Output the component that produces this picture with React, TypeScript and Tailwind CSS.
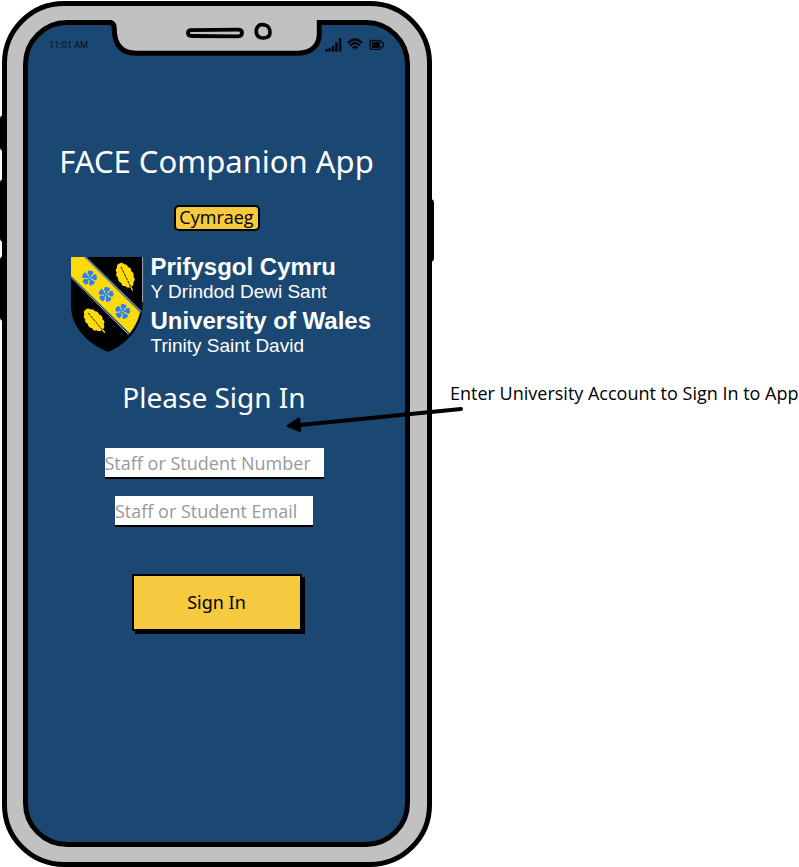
function StatusIcons() {
  return (
    <svg width="60" height="16" viewBox="0 0 60 16" aria-label="Signal, Wi-Fi and battery" role="img">
      <g fill="#000810">
        <rect x="0" y="12" width="3" height="2.6" />
        <rect x="3.4" y="11" width="2.4" height="3.6" />
        <rect x="6.8" y="9" width="2.6" height="5.6" />
        <rect x="10.2" y="5.4" width="2.6" height="9.2" />
        <rect x="13.8" y="1" width="2.6" height="13.6" />
      </g>
      <g fill="none" stroke="#000810" strokeLinecap="round">
        <path d="M23.4 5.6Q30 -.6 36.6 5.6" strokeWidth="2.2" />
        <path d="M25.6 8.3Q30 4 34.4 8.3" strokeWidth="2" />
        <path d="M28 10.6Q30 8.8 32 10.6" strokeWidth="1.8" />
        <path d="M46.5 3.5H54.5Q56 3.5 56.3 5L58.3 6V9.5L56.3 10.5Q56 12.3 54.5 12.3H46.5Q45.2 12.3 45.2 11V4.8Q45.2 3.5 46.5 3.5Z" strokeWidth="1.3" />
      </g>
      <path d="M28.6 11.4H31.4L30 13Z" fill="#000810" />
      <rect x="47" y="5" width="8" height="6" fill="#000810" />
    </svg>
  );
}

function Notch() {
  return (
    <svg className="absolute -top-[7px] left-[76px]" width="222" height="40" viewBox="104 18 222 40" aria-hidden="true">
      <path d="M112 18V22.7Q114.5 24 114.5 30C114.5 44 121 53.4 136 53.4H298C313 53.4 319.3 44 319.3 32V18Z" fill="#c1c1c1" />
      <path
        d="M104 22.5H110Q114.2 23 114.2 28C114.2 44 121 53.2 136 53.2H298C313 53.2 319.3 44 319.3 34V22.5H326"
        fill="none"
        stroke="#000"
        strokeWidth="5"
      />
      <g fill="none" stroke="#000">
        <path d="M191 30.2L238 29.6Q242 29.6 242 32.5Q242 36.3 238 36.3L192 36Q188 36 188 33Q188 30.2 191 30.2Z" strokeWidth="3.8" />
        <path d="M260 24.8Q256 27 256.2 32Q257 38 263 38Q270 38 270 32.5Q270 27 266 25.4Q263 24.2 260 24.8Z" strokeWidth="3.6" />
      </g>
    </svg>
  );
}

function Flower({ x, y }: { x: number; y: number }) {
  return (
    <g transform={`translate(${x} ${y}) scale(1.12)`} fill="#2a7fff">
      {[10, 82, 154, 226, 298].map((a) => (
        <path key={a} transform={`rotate(${a})`} d="M-.7 0L-.9 -2.4Q-3 -3.6 -2.6 -5.6Q-2 -7 0 -6.6Q2 -7 2.6 -5.6Q3 -3.6 .9 -2.4L.7 0Z" />
      ))}
      <circle r=".7" fill="#ffdb0a" />
    </g>
  );
}

function Leaf({ x, y, turn }: { x: number; y: number; turn: number }) {
  return (
    <g transform={`translate(${x} ${y}) rotate(${turn})`}>
      <path
        d="M0 -14Q3.4 -14 4 -11Q7 -10 6.2 -7Q9 -5 7.4 -1.6Q9.4 1.6 6.8 4.4Q8 8 4.6 8.8Q3.6 12.4 .7 12V16H-.6V12Q-3.8 12.4 -4.6 8.8Q-8 8 -6.8 4.4Q-9.4 1.6 -7.4 -1.6Q-9 -5 -6.2 -7Q-7 -10 -4 -11Q-3.4 -14 0 -14Z"
        fill="#ffdb0a"
      />
      <path d="M0 -10V12" stroke="#000" strokeWidth=".8" strokeDasharray="3 .8" />
    </g>
  );
}

function Shield() {
  return (
    <svg width="74" height="97" viewBox="0 0 74 97" aria-hidden="true" className="mt-[2px] shrink-0">
      <path d="M1 1H72.6V48C72.6 72 56 89 37.7 95.8C18 88 1 71 1 50Z" fill="#000" />
      <path d="M1 21L58.4 79L61 76.6Q69 66 71 55V54L17 1H1Z" fill="#1b4872" />
      <path d="M1 1H14L70 56.3Q67 68 59.7 77.3L1 19.7Z" fill="#ffdb0a" />
      <path d="M15 1L71.5 56M1 21.4L58.6 78.6M72.6 1V46" fill="none" stroke="#dfe6ee" strokeWidth=".7" />
      <Flower x={19.5} y={22} />
      <Flower x={36} y={38.5} />
      <Flower x={52.6} y={55.5} />
      <Leaf x={55.4} y={20} turn={-26} />
      <Leaf x={24.5} y={64.5} turn={-40} />
    </svg>
  );
}

function UniversityLogo() {
  return (
    <div className="mt-[23px] flex w-[294px] items-start gap-[7px] whitespace-nowrap font-['Liberation_Sans',Arial,sans-serif] text-white">
      <Shield />
      <div>
        <p className="text-[24px] leading-[26px] font-bold">Prifysgol Cymru</p>
        <p className="text-[19px] leading-[24px]">Y Drindod Dewi Sant</p>
        <p className="mt-1 text-[24px] leading-[26px] font-bold">University of Wales</p>
        <p className="text-[19px] leading-[24px]">Trinity Saint David</p>
      </div>
    </div>
  );
}

function Phone() {
  return (
    <div className="relative ml-[2px] w-[430px] shrink-0 rounded-[62px] border-[5px] border-black bg-[#c1c1c1] pt-[14px] pr-[17px] pb-[15px] pl-[16px]">
      <span className="absolute top-[109px] -left-[7px] h-[36px] w-[4px] rounded-l-sm bg-black" />
      <span className="absolute top-[173px] -left-[7px] h-[63px] w-[4px] rounded-l-sm bg-black" />
      <span className="absolute top-[250px] -left-[7px] h-[65px] w-[4px] rounded-l-sm bg-black" />
      <span className="absolute top-[193px] -right-[7px] h-[63px] w-[4px] rounded-r-sm bg-black" />

      <div className="relative rounded-[44px] border-[5px] border-black bg-[#1b4872] pb-[211px]">
        <Notch />
        <div className="flex h-10 items-center justify-between pr-[20px] pl-[21px]">
          <span className="font-['Open_Sans',sans-serif] text-[9px] font-medium text-[#000810]">11:01 AM</span>
          <StatusIcons />
        </div>

        <form className="pt-[76px]" onSubmit={(e) => e.preventDefault()}>
          <div className="flex flex-col items-center">
            <h1 className="font-['Noto_Sans',sans-serif] text-[31px] leading-[40px] text-white">FACE Companion App</h1>
            <button
              type="button"
              className="mt-[24px] flex h-[26px] w-[86px] items-center justify-center rounded-[5px] border-[2px] border-black bg-[#f6ca3e] pb-[2px] font-['Open_Sans',sans-serif] text-[18px] leading-[20px] text-black"
            >
              Cymraeg
            </button>
            <UniversityLogo />
          </div>
          <div className="flex flex-col items-center pr-[5px]">
            <h2 className="mt-[21px] font-['Noto_Sans',sans-serif] text-[28px] leading-[36px] text-white">Please Sign In</h2>
            <input
              type="text"
              aria-label="Staff or Student Number"
              placeholder="Staff or Student Number"
              className="mt-[33px] h-[31px] w-[219px] border-b-2 border-black bg-white font-['Open_Sans',sans-serif] text-[18px] text-black placeholder:text-[#999999]"
            />
            <input
              type="email"
              aria-label="Staff or Student Email"
              placeholder="Staff or Student Email"
              className="mt-[17px] h-[31px] w-[198px] border-b-2 border-black bg-white font-['Open_Sans',sans-serif] text-[18px] text-black placeholder:text-[#999999]"
            />
          </div>
          <div className="flex justify-center pt-[47px]">
            <button
              type="submit"
              className="h-[57px] w-[170px] border-2 border-black bg-[#f6ca3e] font-['Noto_Sans',sans-serif] text-[18px] text-black shadow-[3px_3px_0_#000]"
            >
              Sign In
            </button>
          </div>
        </form>
      </div>
    </div>
  );
}

export default function App() {
  return (
    <main className="flex items-start overflow-hidden bg-white pt-px">
      <Phone />
      <aside className="relative flex-1 pt-[378px] pl-[18px]">
        <p className="font-['Open_Sans',sans-serif] text-[18px] leading-[28px] whitespace-nowrap text-black">
          Enter University Account to Sign In to App
        </p>
        <svg className="absolute top-[399px] -left-[150px]" width="184" height="40" viewBox="282 400 184 40" aria-hidden="true">
          <path d="M290 426L461 409" stroke="#000" strokeWidth="4" strokeLinecap="round" />
          <path d="M288 425.8L299 418.6L300 430.8Z" fill="#000" stroke="#000" strokeWidth="2.5" strokeLinejoin="round" />
        </svg>
      </aside>
    </main>
  );
}
